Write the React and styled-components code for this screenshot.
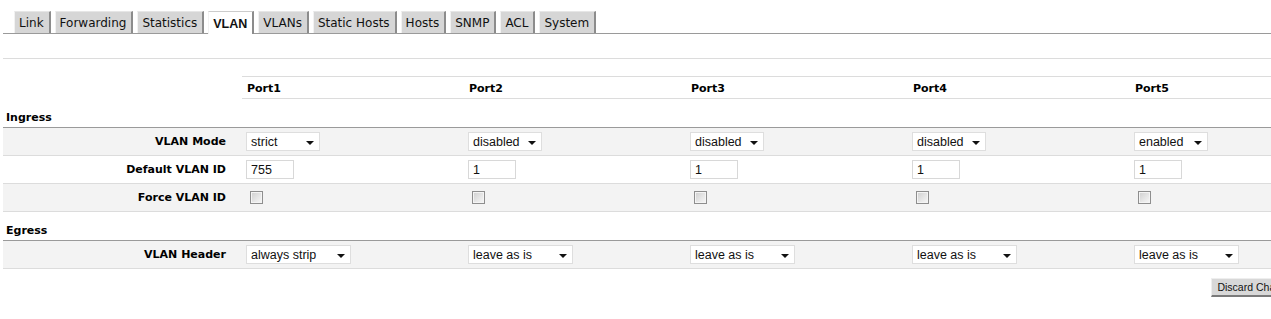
import styled, { createGlobalStyle } from 'styled-components'

const GlobalStyle = createGlobalStyle`
  html, body {
    margin: 0;
    padding: 0;
    background: #fff;
    overflow: hidden;
  }
  body {
    font-family: "DejaVu Sans", Verdana, sans-serif;
    font-size: 11px;
    color: #000;
  }
`

const Page = styled.div`
  width: 1352px;
  padding: 11px 0 0 3px;
`

const TabBar = styled.ul`
  display: flex;
  align-items: flex-end;
  gap: 4px;
  margin: 0;
  padding: 0 0 0 11px;
  list-style: none;
  height: 22px;
  border-bottom: 1px solid #9a9a9a;
`

const Tab = styled.li`
  box-sizing: border-box;
  height: ${p => (p.active ? '23px' : '22px')};
  margin-bottom: ${p => (p.active ? '-1px' : '0')};
  padding: ${p => (p.active ? '2px 5px 0 4px' : '0 5px 0 4px')};
  display: flex;
  align-items: center;
  font-size: ${p => (p.active ? '12.5px' : '12px')};
  font-weight: ${p => (p.active ? 'bold' : 'normal')};
  font-family: ${p => (p.active ? '"Liberation Sans", Arial, sans-serif' : '"DejaVu Sans", Verdana, sans-serif')};
  background: ${p => (p.active ? '#fff' : '#d6d6d6')};
  border-top: 1px solid ${p => (p.active ? '#ccc' : '#e6e6e6')};
  border-left: 1px solid #f2f2f2;
  border-right: 2px solid #8c8c8c;
  color: #111;
`

const Divider = styled.div`
  margin-top: 24px;
  border-top: 1px solid #dcdcdc;
`

const Grid = styled.div`
  margin-top: 17px;
`

const Row = styled.div`
  display: grid;
  grid-template-columns: 239px repeat(5, 222px);
  background: ${p => (p.shade ? '#f3f3f3' : '#fff')};
  border-bottom: 1px solid #dcdcdc;
  height: 27px;
  align-items: center;
`

const HeadRow = styled.div`
  display: grid;
  grid-template-columns: 239px repeat(5, 222px);
  height: 23px;
`

const HeadCell = styled.div`
  display: flex;
  align-items: center;
  padding: 1px 0 0 5px;
  font-weight: bold;
  border-top: ${p => (p.blank ? 'none' : '1px solid #dcdcdc')};
  border-bottom: ${p => (p.blank ? 'none' : '1px solid #dcdcdc')};
`

const Section = styled.div`
  height: 29px;
  display: flex;
  align-items: flex-end;
  padding: 0 0 3px 3px;
  box-sizing: border-box;
  font-weight: bold;
  border-bottom: 1px solid #9a9a9a;
`

const Label = styled.div`
  font-weight: bold;
  text-align: right;
  padding-right: 16px;
`

const Cell = styled.div`
  display: flex;
  align-items: center;
  padding-left: 4px;
`

const SelectBox = styled.div`
  position: relative;
  box-sizing: border-box;
  width: ${p => p.width}px;
  height: 19px;
  background: #fff;
  border: 1px solid #dedede;
  display: flex;
  align-items: center;
  padding-left: 4px;
  font-family: "Liberation Sans", Arial, sans-serif;
  font-size: 12.5px;
  color: #111;
  &::after {
    content: '';
    position: absolute;
    right: 5px;
    top: 8px;
    border-left: 4px solid transparent;
    border-right: 4px solid transparent;
    border-top: 4px solid #111;
  }
`

const TextInput = styled.input`
  box-sizing: border-box;
  width: 48px;
  height: 19px;
  margin: 0;
  padding: 0 0 0 4px;
  border: 1px solid #d8d8d8;
  background: #fff;
  font-family: "Liberation Sans", Arial, sans-serif;
  font-size: 12.5px;
  color: #111;
  outline: none;
`

const Check = styled.input`
  appearance: none;
  box-sizing: border-box;
  width: 13px;
  height: 13px;
  margin: 0 0 0 4px;
  border: 1px solid #8e8e8e;
  background: linear-gradient(135deg, #cfcfcf 0%, #e8e8e8 60%, #f7f7f7 100%);
  box-shadow: inset 0 0 0 1px #f4f4f4;
`

const ButtonBar = styled.div`
  display: flex;
  justify-content: flex-end;
  margin-top: 9px;
  padding-right: 50px;
`

const Button = styled.button`
  height: 19px;
  padding: 0 5px;
  margin: 0;
  background: #d8d8d8;
  border-top: 1px solid #eee;
  border-left: 1px solid #eee;
  border-right: 2px solid #7a7a7a;
  border-bottom: 2px solid #7a7a7a;
  font-family: "Liberation Sans", Arial, sans-serif;
  font-size: 10.5px;
  color: #111;
  white-space: nowrap;
`

const tabs = ['Link', 'Forwarding', 'Statistics', 'VLAN', 'VLANs', 'Static Hosts', 'Hosts', 'SNMP', 'ACL', 'System']

const ports = [
  { name: 'Port1', mode: 'strict', id: '755', header: 'always strip' },
  { name: 'Port2', mode: 'disabled', id: '1', header: 'leave as is' },
  { name: 'Port3', mode: 'disabled', id: '1', header: 'leave as is' },
  { name: 'Port4', mode: 'disabled', id: '1', header: 'leave as is' },
  { name: 'Port5', mode: 'enabled', id: '1', header: 'leave as is' },
]

export default function App() {
  return (
    <>
      <GlobalStyle />
      <Page>
        <TabBar>
          {tabs.map(t => <Tab key={t} active={t === 'VLAN'}>{t}</Tab>)}
        </TabBar>
        <Divider />
        <Grid>
          <HeadRow>
            <HeadCell blank />
            {ports.map(p => <HeadCell key={p.name}>{p.name}</HeadCell>)}
          </HeadRow>
          <Section>Ingress</Section>
          <Row shade>
            <Label>VLAN Mode</Label>
            {ports.map(p => <Cell key={p.name}><SelectBox width={74}>{p.mode}</SelectBox></Cell>)}
          </Row>
          <Row>
            <Label>Default VLAN ID</Label>
            {ports.map(p => <Cell key={p.name}><TextInput defaultValue={p.id} /></Cell>)}
          </Row>
          <Row shade>
            <Label>Force VLAN ID</Label>
            {ports.map(p => <Cell key={p.name}><Check type="checkbox" /></Cell>)}
          </Row>
          <Section>Egress</Section>
          <Row shade>
            <Label>VLAN Header</Label>
            {ports.map(p => <Cell key={p.name}><SelectBox width={105}>{p.header}</SelectBox></Cell>)}
          </Row>
        </Grid>
        <ButtonBar>
          <Button>Discard Changes</Button>
        </ButtonBar>
      </Page>
    </>
  )
}
